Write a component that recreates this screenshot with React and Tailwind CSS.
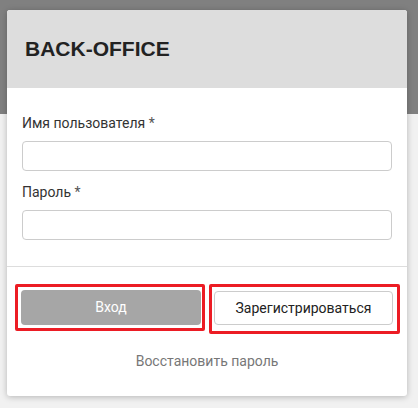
import React from 'react';

const FONT = { fontFamily: 'Roboto, "Noto Sans", sans-serif' };

function Field({ label, className = '' }) {
  return (
    <div className={className}>
      <label className="block text-[14px] leading-[20px] text-[#333] mb-[8px]">{label} <span className="text-[#555]">*</span></label>
      <input type="text" className="block w-full h-[30px] rounded-[4px] border border-[#cccccc] bg-white outline-none" />
    </div>
  );
}

export default function App() {
  return (
    <div
      className="min-h-screen w-[418px] h-[408px] pt-[10px] bg-[linear-gradient(to_bottom,#808080_114px,#f1f1f1_114px)]"
      style={FONT}
    >
      <div className="ml-[7px] w-[400px] rounded-[3px] bg-white overflow-hidden shadow-[0_1px_6px_rgba(0,0,0,0.25)]">
        {/* Header */}
        <div className="h-[78px] bg-[#dddddd] flex items-center px-[18px]">
          <h1 className="text-[21px] font-bold text-[#222]" style={{ fontFamily: '"Liberation Sans", Arial, sans-serif' }}>
            BACK-OFFICE
          </h1>
        </div>

        {/* Form */}
        <div className="px-[15px] pt-[25px] pb-[26px] border-b border-[#dddddd]">
          <Field label="Имя пользователя" />
          <Field label="Пароль" className="mt-[11px]" />
        </div>

        {/* Footer */}
        <div className="pt-[17px] pb-[25px]">
          <div className="flex gap-[4px] pl-[8px] pr-[7px]">
            <div className="w-[190px] h-[47px] border-[3px] border-[#ec1c24] rounded-[2px] pl-[3px] pr-[1px] pt-[3px] pb-[3px]">
              <button className="w-full h-full rounded-[4px] bg-[#a6a6a6] text-white text-[14px]">Вход</button>
            </div>
            <div className="w-[191px] h-[50px] border-[3px] border-[#ec1c24] rounded-[2px] pl-[2px] pr-[4px] pt-[4px] pb-[6px]">
              <button className="w-full h-full rounded-[4px] bg-white border border-[#cccccc] text-[#222] text-[14px]">Зарегистрироваться</button>
            </div>
          </div>
          <div className="mt-[17px] text-center text-[14px] leading-[20px] text-[#777]">Восстановить пароль</div>
        </div>
      </div>
    </div>
  );
}
